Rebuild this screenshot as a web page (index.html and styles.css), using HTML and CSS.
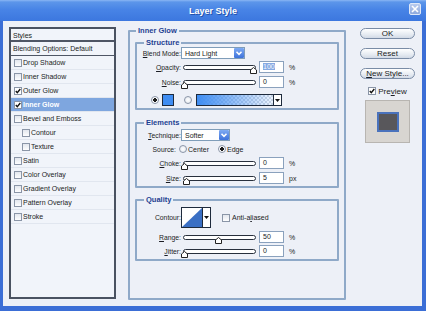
FILE: index.html
```html
<!DOCTYPE html>
<html lang="en">
<head>
  <meta charset="UTF-8">
  <meta name="viewport" content="width=device-width, initial-scale=1.0">
  <title>Layer Style</title>
  <link rel="stylesheet" href="styles.css">
</head>
<body>
  <div class="window">

    <header class="titlebar">
      <span></span>
      <h1 class="title">Layer Style</h1>
      <span class="close">
        <svg width="8" height="8" viewBox="0 0 8 8"><path d="M1 1 L7 7 M7 1 L1 7" stroke="#fff" stroke-width="1.6"/></svg>
      </span>
    </header>

    <div class="content">

      <aside class="styles">
        <div class="styles-head">Styles</div>
        <div class="styles-blend">Blending Options: Default</div>
        <ul class="effects">
          <li><span class="check"></span>Drop Shadow</li>
          <li><span class="check"></span>Inner Shadow</li>
          <li><span class="check on"></span>Outer Glow</li>
          <li class="active"><span class="check on"></span>Inner Glow</li>
          <li><span class="check"></span>Bevel and Emboss</li>
          <li class="sub"><span class="check"></span>Contour</li>
          <li class="sub"><span class="check"></span>Texture</li>
          <li><span class="check"></span>Satin</li>
          <li><span class="check"></span>Color Overlay</li>
          <li><span class="check"></span>Gradient Overlay</li>
          <li><span class="check"></span>Pattern Overlay</li>
          <li><span class="check"></span>Stroke</li>
        </ul>
      </aside>

      <fieldset class="group glow">
        <legend>Inner Glow</legend>

        <fieldset class="group structure">
          <legend>Structure</legend>
          <div class="row">
            <span class="label"><u>B</u>lend Mode:</span>
            <div class="select blend"><span>Hard Light</span><i class="arrow"></i></div>
          </div>
          <div class="row r-opacity">
            <span class="label"><u>O</u>pacity:</span>
            <div class="slider"><div class="track"></div><span class="thumb" style="left: 97%"></span></div>
            <div class="field"><span class="selected">100</span></div>
            <span class="unit">%</span>
          </div>
          <div class="row r-noise">
            <span class="label"><u>N</u>oise:</span>
            <div class="slider"><div class="track"></div><span class="thumb" style="left: 2%"></span></div>
            <div class="field">0</div>
            <span class="unit">%</span>
          </div>
          <div class="row r-color">
            <span class="radio on"></span>
            <span class="swatch"></span>
            <span class="radio"></span>
            <div class="gradient"><span class="ramp"></span><i class="drop"></i></div>
          </div>
        </fieldset>

        <fieldset class="group elements">
          <legend>Elements</legend>
          <div class="row">
            <span class="label"><u>T</u>echnique:</span>
            <div class="select technique"><span>Softer</span><i class="arrow"></i></div>
          </div>
          <div class="row r-source">
            <span class="label">Source:</span>
            <span class="radio"></span><span class="opt">Center</span>
            <span class="radio on edge"></span><span class="opt">Edge</span>
          </div>
          <div class="row r-choke">
            <span class="label"><u>C</u>hoke:</span>
            <div class="slider"><div class="track"></div><span class="thumb" style="left: 2%"></span></div>
            <div class="field">0</div>
            <span class="unit">%</span>
          </div>
          <div class="row r-size">
            <span class="label"><u>S</u>ize:</span>
            <div class="slider"><div class="track"></div><span class="thumb" style="left: 5%"></span></div>
            <div class="field">5</div>
            <span class="unit">px</span>
          </div>
        </fieldset>

        <fieldset class="group quality">
          <legend>Quality</legend>
          <div class="row r-contour">
            <span class="label">Contour:</span>
            <div class="contour">
              <svg width="20" height="19" viewBox="0 0 20 19"><rect width="20" height="19" fill="#fff"/><polygon points="0,19 20,0 20,19" fill="#3a6fc4"/></svg>
              <i class="drop"></i>
            </div>
            <span class="check aa"></span><span class="opt">Anti-a<u>l</u>iased</span>
          </div>
          <div class="row r-range">
            <span class="label"><u>R</u>ange:</span>
            <div class="slider"><div class="track"></div><span class="thumb" style="left: 48%"></span></div>
            <div class="field">50</div>
            <span class="unit">%</span>
          </div>
          <div class="row r-jitter">
            <span class="label"><u>J</u>itter:</span>
            <div class="slider"><div class="track"></div><span class="thumb" style="left: 2%"></span></div>
            <div class="field">0</div>
            <span class="unit">%</span>
          </div>
        </fieldset>
      </fieldset>

      <div class="actions">
        <button class="btn">OK</button>
        <button class="btn">Reset</button>
        <button class="btn"><u>N</u>ew Style...</button>
        <div class="preview-toggle"><span class="check on"></span>Pre<u>v</u>iew</div>
        <div class="preview"><span class="preview-box"></span></div>
      </div>

    </div>
  </div>
</body>
</html>
```

FILE: styles.css
```css
* {
  margin: 0;
  padding: 0;
  box-sizing: border-box;
}

html, body {
  height: 100%;
}

body {
  font-family: "Liberation Sans", Arial, sans-serif;
  font-size: 7px;
  color: #1b1d24;
  overflow: hidden;
}

u {
  text-decoration: underline;
}

.window {
  width: 426px;
  height: 311px;
  display: flex;
  flex-direction: column;
  background: #3b6ed6;
}

/* title bar */

.titlebar {
  height: 21px;
  flex-shrink: 0;
  display: grid;
  grid-template-columns: 1fr auto 1fr;
  align-items: center;
  background: linear-gradient(#8ab6f4 0, #5c96ea 2px, #4884e6 45%, #3c77df 100%);
}

.title {
  font-size: 9px;
  font-weight: 700;
  color: #fff;
  text-shadow: 1px 1px 0 #2552aa;
}

.close {
  justify-self: end;
  align-self: start;
  margin: 3px 5px 0 0;
  width: 12px;
  height: 12px;
  border: 1px solid #dfe8f8;
  border-radius: 2px;
  background: linear-gradient(#b9cbee, #8ea9dd);
  display: flex;
  align-items: center;
  justify-content: center;
}

/* body */

.content {
  flex: 1;
  margin: 0 4px 5px 3px;
  padding: 6px 0 0 6px;
  background: #edf0f7;
  display: flex;
  align-items: flex-start;
}

/* styles list */

.styles {
  width: 107px;
  height: 272px;
  border: 2px solid #4a5261;
  background: #f1f4fa;
}

.styles-head, .styles-blend {
  height: 13px;
  line-height: 13px;
  padding-left: 2px;
}

.styles-head {
  border-bottom: 2px solid #4f5665;
}

.styles-blend {
  height: 14px;
  border-bottom: 1px solid #4f5665;
}

.effects {
  list-style: none;
}

.effects li {
  height: 14px;
  display: flex;
  align-items: center;
  padding-left: 3px;
  border-bottom: 1px solid #e1e6ef;
}

.effects li.sub {
  padding-left: 11px;
}

.effects li.active {
  background: #7ea6df;
  color: #fff;
  font-weight: 700;
}

.check {
  width: 8px;
  height: 8px;
  margin-right: 1px;
  flex-shrink: 0;
  border: 1px solid #8a95a7;
  background: linear-gradient(#e3e7ee, #fdfdfe);
  display: inline-flex;
}

.check.on {
  background: #fff url("data:image/svg+xml;utf8,<svg xmlns='http://www.w3.org/2000/svg' width='6' height='6' viewBox='0 0 6 6'><polyline points='0.8,3 2.3,4.7 5.3,1' fill='none' stroke='%23111' stroke-width='1.4'/></svg>") center / 6px 6px no-repeat;
}

/* group boxes */

.group {
  border: 2px solid #8fa9c8;
  border-radius: 1px;
  min-width: 0;
}

.group legend {
  font-size: 7.5px;
  font-weight: 700;
  line-height: 8px;
  color: #1e3f92;
  padding: 0 2px;
}

.glow {
  margin-left: 12px;
  width: 218px;
  height: 273px;
  padding: 4px 5px 0 5px;
}

.glow > legend {
  margin-left: 1px;
}

.structure, .elements, .quality {
  padding: 0 0 2px 3px;
}

.structure legend, .elements legend, .quality legend {
  margin-left: 4px;
}

.elements {
  margin-top: 9px;
  padding-top: 2px;
}

.quality {
  margin-top: 8px;
  padding-top: 3px;
}

.row {
  display: flex;
  align-items: center;
  height: 12px;
  white-space: nowrap;
}

.label {
  width: 41px;
  margin-right: 1px;
  flex-shrink: 0;
  text-align: right;
  font-size: 6.8px;
}

.r-opacity, .r-source, .r-choke, .r-range {
  margin-top: 2px;
}

.r-noise, .r-size, .r-range {
  margin-top: 3px;
}

.r-jitter {
  margin-top: 2px;
}

.r-color {
  margin-top: 6px;
}

/* dropdowns */

.select {
  height: 12px;
  margin-left: -1px;
  border: 1px solid #7f9db9;
  background: #fff;
  display: flex;
  align-items: center;
}

.select span {
  flex: 1;
  padding-left: 3px;
}

.blend {
  width: 64px;
}

.technique {
  width: 49px;
}

.arrow {
  width: 10px;
  height: 10px;
  border-radius: 1px;
  background: url("data:image/svg+xml;utf8,<svg xmlns='http://www.w3.org/2000/svg' width='10' height='10' viewBox='0 0 10 10'><path d='M2.5 3.8 L5 6.3 L7.5 3.8' fill='none' stroke='%23fff' stroke-width='1.6'/></svg>") center no-repeat, linear-gradient(#7fabf3, #3d72db);
}

/* sliders */

.slider {
  position: relative;
  width: 73px;
  height: 12px;
  margin-left: 1px;
  display: flex;
  align-items: center;
}

.track {
  width: 100%;
  height: 5px;
  border: 1px solid #28303d;
  border-radius: 3px;
  background: #fff;
}

.thumb {
  position: absolute;
  top: 6px;
  width: 7px;
  height: 7px;
  margin-left: -3.5px;
  background: url("data:image/svg+xml;utf8,<svg xmlns='http://www.w3.org/2000/svg' width='7' height='7' viewBox='0 0 7 7'><polygon points='0.5,3 3.5,0.5 6.5,3 6.5,6.5 0.5,6.5' fill='%23fff' stroke='%23222' stroke-width='1'/></svg>") no-repeat;
}

.field {
  width: 25px;
  height: 12px;
  margin-left: 3px;
  padding-left: 3px;
  line-height: 10px;
  border: 1px solid #8aa1bd;
  background: #fff;
}

.field .selected {
  background: #86a9e2;
  color: #f4f7fd;
}

.unit {
  margin-left: 5px;
}

/* colour row */

.radio {
  width: 8px;
  height: 8px;
  flex-shrink: 0;
  border: 1px solid #8a95a7;
  border-radius: 50%;
  background: radial-gradient(#fff, #dfe4ec);
}

.radio.on {
  background: radial-gradient(#1c1c1c 0 1.6px, #fff 2px);
}

.r-color .radio.on {
  margin-left: 11px;
}

.swatch {
  width: 12px;
  height: 12px;
  margin-left: 3px;
  border: 1px solid #1e2a3c;
  background: #3f8df2;
}

.r-color .radio:not(.on) {
  margin-left: 10px;
}

.gradient {
  width: 86px;
  height: 12px;
  margin-left: 4px;
  border: 1px solid #1e2a3c;
  display: flex;
}

.ramp {
  flex: 1;
  background: linear-gradient(to right, #3f8df2, rgba(63, 141, 242, 0.1)), repeating-conic-gradient(#d7dbe2 0 25%, #fff 0 50%) 0 0 / 4px 4px;
}

.drop {
  width: 8px;
  border-left: 1px solid #1e2a3c;
  background: #fff url("data:image/svg+xml;utf8,<svg xmlns='http://www.w3.org/2000/svg' width='5' height='3' viewBox='0 0 5 3'><polygon points='0,0 5,0 2.5,3' fill='%23111'/></svg>") center no-repeat;
}

/* elements */

.r-source .label {
  width: 36px;
  margin-right: 3px;
}

.opt {
  margin-left: 1px;
}

.radio.edge {
  margin-left: 9px;
}

/* quality */

.r-contour {
  height: 21px;
}

.contour {
  height: 21px;
  margin-left: -1px;
  border: 1px solid #1e2a3c;
  display: flex;
  background: #fff;
}

.contour svg {
  display: block;
}

.check.aa {
  margin-left: 11px;
}

/* right column */

.actions {
  width: 55px;
  margin-left: 14px;
  padding-top: 1px;
  display: flex;
  flex-direction: column;
  align-items: center;
}

.btn {
  width: 55px;
  height: 11px;
  border: 1px solid #7a8ca6;
  border-radius: 6px;
  background: linear-gradient(#ffffff, #e6ebf2 60%, #d2dae6);
  font-family: "Liberation Sans", Arial, sans-serif;
  font-size: 8px;
  line-height: 9px;
  color: #1b1d24;
}

.btn + .btn {
  margin-top: 9px;
}

.preview-toggle {
  height: 10px;
  margin-top: 7px;
  display: flex;
  align-items: center;
  font-size: 8px;
}

.preview-toggle .check {
  margin-right: 2px;
}

.preview {
  width: 45px;
  height: 43px;
  margin-top: 4px;
  border: 1px solid #b8b5b1;
  background: #d8d5d1;
  display: flex;
  align-items: center;
  justify-content: center;
}

.preview-box {
  width: 22px;
  height: 20px;
  border: 2px solid #4a72bc;
  background: #58575b;
}
```
